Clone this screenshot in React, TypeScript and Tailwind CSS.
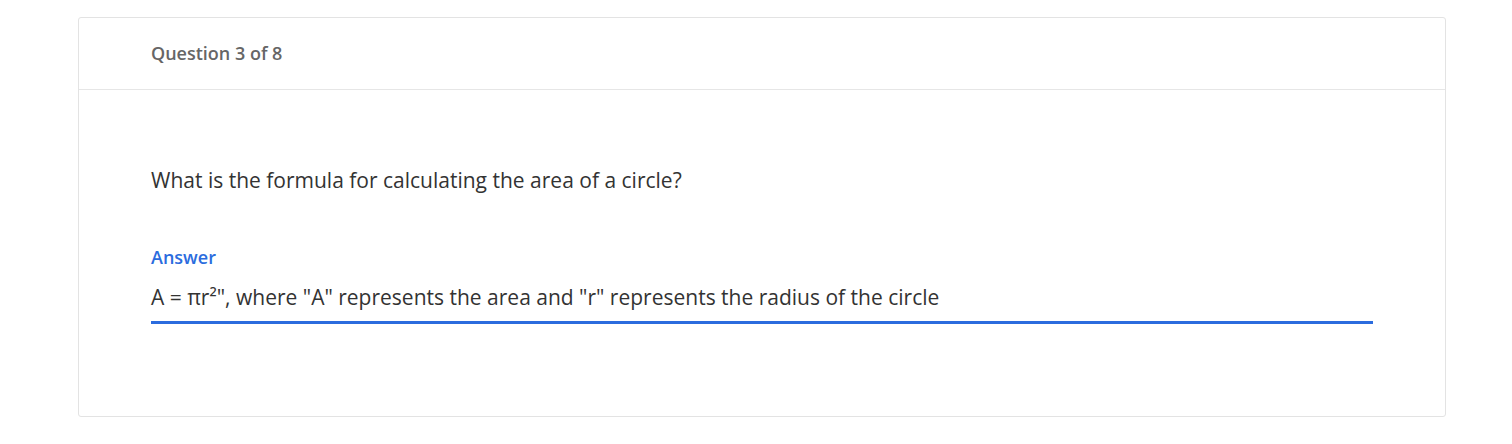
export default function App() {
  return (
    <div
      className="min-h-screen bg-white pt-[17px]"
      style={{ fontFamily: '"Open Sans", "Liberation Sans", sans-serif' }}
    >
      <div className="ml-[78px] w-[1368px] rounded-[3px] border border-[#e3e3e3] bg-white">
        {/* Header */}
        <div className="border-b border-[#e6e6e6] px-[72px] pt-[23px] pb-[24px]">
          <h2 className="text-[18px] leading-6 font-semibold text-[#666666]">
            Question 3 of 8
          </h2>
        </div>

        {/* Body */}
        <div className="px-[72px] pt-[76px] pb-[92px]">
          <p className="text-[21px] leading-7 text-[#333333]">
            What is the formula for calculating the area of a circle?
          </p>

          <div className="mt-[51px]">
            <label className="block text-[18px] leading-6 font-semibold text-[#2b6cde]">
              Answer
            </label>
            <div className="mt-[14px] border-b-[3px] border-[#2b6cde] pb-[10px] text-[21px] leading-7 text-[#333333]">
              A = πr²", where "A" represents the area and "r" represents the radius of the circle
            </div>
          </div>
        </div>
      </div>
    </div>
  )
}
